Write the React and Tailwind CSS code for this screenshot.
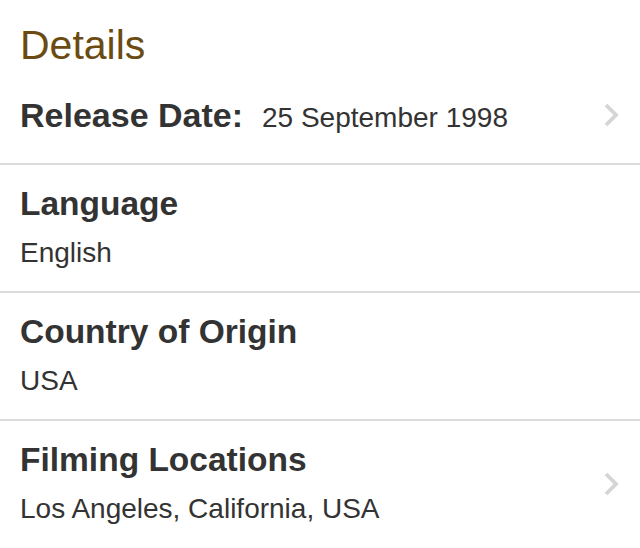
import React from "react";

const Chevron = () => (
  <svg width="16" height="26" viewBox="0 0 16 26" className="shrink-0">
    <polyline
      points="3,3 13,13 3,23"
      fill="none"
      stroke="#d5d5d5"
      strokeWidth="3.8"
      strokeLinecap="butt"
      strokeLinejoin="miter"
    />
  </svg>
);

const rows = [
  ["Language", "English", false],
  ["Country of Origin", "USA", false],
  ["Filming Locations", "Los Angeles, California, USA", true],
];

const App = () => {
  return (
    <div
      className="w-[640px] h-[548px] bg-white text-[#333333] overflow-hidden"
      style={{ fontFamily: '"Liberation Sans", Arial, sans-serif' }}
    >
      <h1 className="pt-[21px] px-5 text-[41px] leading-[48px] text-[#6b4b12] font-normal">
        Details
      </h1>

      {/* Release date */}
      <div className="flex items-center pt-[26px] pb-[25px] pl-5 pr-[21px] border-b-2 border-[#dddddd]">
        <div className="flex-1 flex items-baseline">
          <span className="text-[34px] leading-[40px] font-bold">Release Date:</span>
          <span className="ml-[19px] text-[28px] leading-[40px]">25 September 1998</span>
        </div>
        <div className="-mt-[4px]">
          <Chevron />
        </div>
      </div>

      {rows.map(([title, value, link], i) => (
        <div
          key={i}
          className="flex items-center pt-[19px] pb-[20px] pl-5 pr-[21px] border-b-2 border-[#dddddd] last:border-b-0"
        >
          <div className="flex-1">
            <div className="text-[33.5px] leading-[40px] font-bold">{title}</div>
            <div className="mt-[11px] text-[28px] leading-[36px]">{value}</div>
          </div>
          {link && <Chevron />}
        </div>
      ))}
    </div>
  );
};

export default App;
